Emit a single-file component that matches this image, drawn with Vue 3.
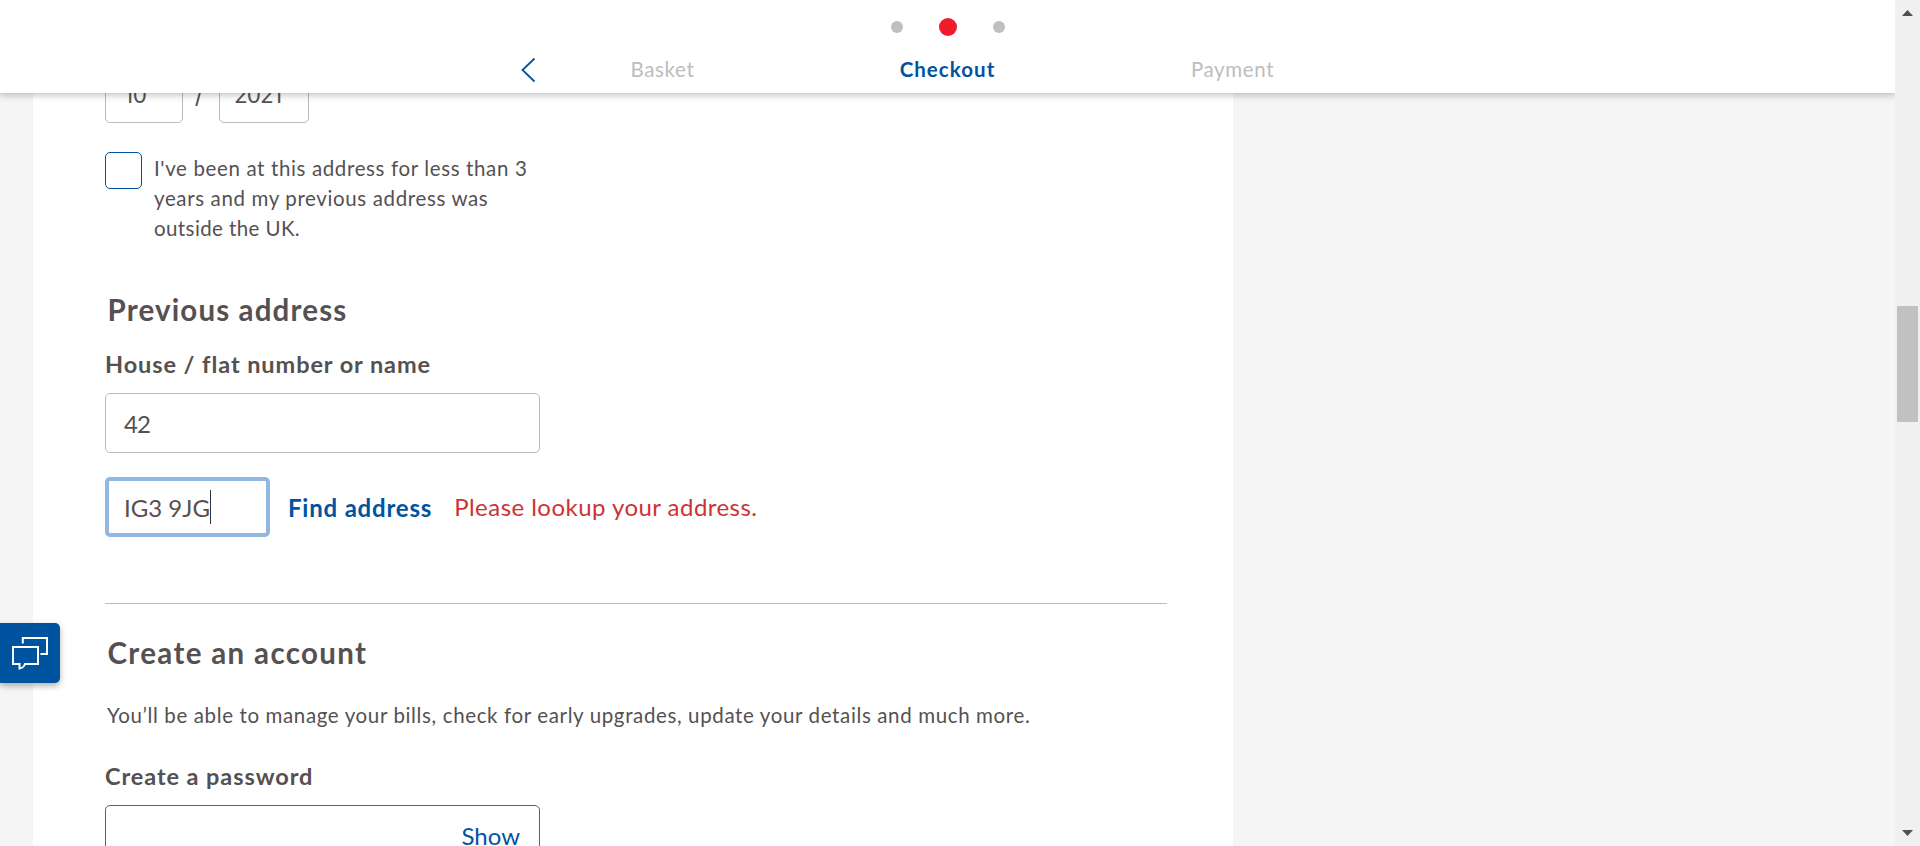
<script setup>
const steps = [
  { label: 'Basket', active: false },
  { label: 'Checkout', active: true },
  { label: 'Payment', active: false },
]
</script>

<template>
  <div class="page">
    <header class="header">
      <svg class="back" viewBox="0 0 16 26" width="16" height="26"><path d="M14.5 1.500 2.500 13l12 11.500" /></svg>
      <div v-for="s in steps" :key="s.label" class="step" :class="{ active: s.active }">{{ s.label }}</div>
      <div class="dots"><i></i><i class="on"></i><i></i></div>
    </header>

    <main class="form">
      <div class="date">
        <div class="field month">10</div>
        <span class="slash">/</span>
        <div class="field year">2021</div>
      </div>
      <div class="check">
        <span class="box"></span>
        <p>I've been at this address for less than 3<br />years and my previous address was<br /><span class="last">outside the UK.</span></p>
      </div>
      <h2 class="prev">Previous address</h2>
      <label class="label house">House / flat number or name</label>
      <div class="field wide number">42</div>
      <div class="lookup">
        <div class="field postcode">IG3 9JG<i class="caret"></i></div>
        <a class="find">Find address</a>
        <span class="error">Please lookup your address.</span>
      </div>
      <hr />
      <h2 class="create">Create an account</h2>
      <p class="intro">You’ll be able to manage your bills, check for early upgrades, update your details and much more.</p>
      <label class="label pass">Create a password</label>
      <div class="field wide invalid"><a class="show">Show</a></div>
    </main>

    <button class="chat" aria-label="Chat">
      <svg viewBox="0 0 60 60" width="60" height="60"><path d="M13 24h25v17H25q-1.500 4-5.500 4.500V41H13zM22.800 20.500V15H47v16h-6.500" /></svg>
    </button>

    <aside class="scrollbar">
      <svg viewBox="0 0 11 6" width="11" height="6"><path d="M0 6 5.500 0 11 6z" /></svg>
      <span class="thumb"></span>
      <svg viewBox="0 0 11 6" width="11" height="6"><path d="M0 0h11L5.500 6z" /></svg>
    </aside>
  </div>
</template>

<style>
html, body { margin: 0; overflow: hidden; }
</style>

<style scoped>
* { box-sizing: border-box; }
.page { position: relative; width: 1920px; height: 846px; overflow: hidden; background: #f5f5f5; color: #555152; font-family: Lato, "Liberation Sans", sans-serif; font-size: 20.5px; letter-spacing: .63px; }
p, h2 { margin: 0; white-space: nowrap; }
.header { position: absolute; z-index: 2; top: 0; left: 0; width: 1895px; height: 93px; background: #fff; box-shadow: 0 2px 7px rgba(0, 0, 0, .25); display: grid; grid-template-columns: 285px 285px 285px; justify-content: center; padding-top: 54px; }
.step { text-align: center; line-height: 31px; color: #bdbdbd; }
.step.active { color: #00539f; font-weight: 700; letter-spacing: 1.05px; }
.back { position: absolute; left: 520px; top: 57px; fill: none; stroke: #00539f; stroke-width: 1.8; }
.dots { position: absolute; top: 18px; left: 0; width: 100%; height: 18px; display: flex; align-items: center; justify-content: center; gap: 36px; }
.dots i { width: 12px; height: 12px; border-radius: 50%; background: #bfbfbf; }
.dots .on { width: 18px; height: 18px; background: #f01c2e; }
.form { margin-left: 33px; width: 1200px; height: 846px; padding: 63px 66px 0 72px; background: #fff; display: flex; flex-direction: column; align-items: flex-start; }
.form > * { flex: none; }
.field { height: 60px; border: 1px solid #bbb; border-radius: 5px; padding-left: 18px; font-size: 24px; line-height: 59px; letter-spacing: 0; background: #fff; }
.date { display: flex; align-items: center; font-family: Inter, Lato, sans-serif; }
.month, .year { font-size: 22.5px; line-height: 62px; letter-spacing: -.9px; }
.month { width: 78px; padding-left: 18px; letter-spacing: -.5px; }
.year { width: 90px; padding-left: 14px; }
.slash { width: 36px; text-align: center; font-size: 24px; padding: 2px 3px 0 0; }
.check { margin-top: 29px; display: flex; gap: 12px; }
.check p { line-height: 30px; margin-top: 1px; }
.last { letter-spacing: .4px; }
.box { width: 37px; height: 37px; border: 1px solid #00539f; border-radius: 5px; }
h2 { font-size: 29.5px; line-height: 36px; }
.prev { margin: 49px 0 0 2.5px; letter-spacing: 1.15px; }
.label { font-weight: 700; font-size: 23.5px; line-height: 30px; letter-spacing: .92px; margin-bottom: 14px; }
.house { margin-top: 21px; }
.wide { width: 435px; }
.number { letter-spacing: -.8px; line-height: 60px; }
.lookup { height: 60px; margin-top: 24px; display: flex; line-height: 60px; }
.postcode { width: 165px; border: 4px solid #90b8e1; padding-left: 15px; line-height: 53px; display: flex; align-items: center; }
.caret { width: 1px; height: 34px; background: #333; }
.find { margin-left: 18px; padding-top: 1px; font-weight: 700; font-size: 24px; letter-spacing: .8px; color: #00539f; }
.error { margin-left: 22px; font-size: 24px; letter-spacing: .46px; color: #c33; }
hr { width: 1062px; height: 1px; border: 0; background: #bbb; margin: 66px 0 0; }
.create { margin: 31px 0 0 2.5px; letter-spacing: 1.35px; }
.intro { margin: 29px 0 0 2px; line-height: 30px; }
.pass { margin-top: 31px; }
.invalid { border-color: #c33; display: flex; justify-content: flex-end; padding-right: 19px; }
.show { color: #00539f; }
.chat { position: absolute; left: 0; top: 623px; width: 60px; height: 60px; border: 0; padding: 0; border-radius: 0 5px 5px 0; background: #00539f; box-shadow: 0 3px 6px rgba(0, 0, 0, .3); }
.chat svg { display: block; fill: none; stroke: #fff; stroke-width: 2; }
.scrollbar { position: absolute; z-index: 3; right: 0; top: 0; width: 25px; height: 846px; background: #f0f0f0; display: flex; flex-direction: column; align-items: center; padding: 10px 0; }
.scrollbar svg { fill: #505050; }
.thumb { width: 21px; height: 116px; margin: 290px 0 auto; background: #c1c1c1; }
</style>
